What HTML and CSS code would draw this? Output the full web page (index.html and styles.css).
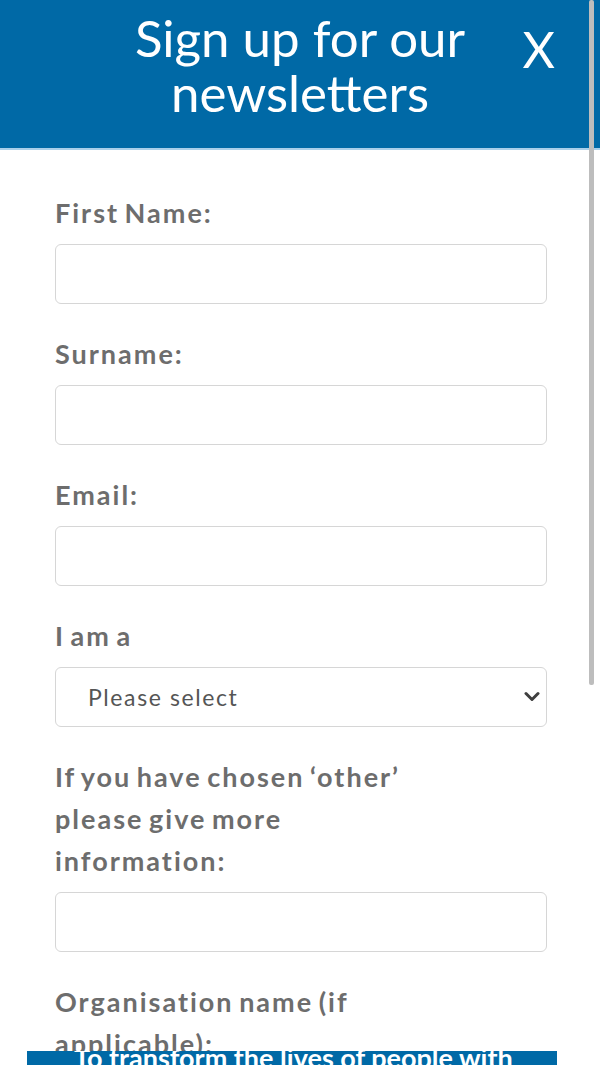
FILE: index.html
```html
<!DOCTYPE html>
<html lang="en">
<head>
<meta charset="utf-8">
<title>Sign up for our newsletters</title>
<link rel="stylesheet" href="styles.css">
</head>
<body>
<div class="modal">
  <header class="header">
    <span class="spacer"></span>
    <h1 class="title">Sign up for our<br>newsletters</h1>
    <button class="close" type="button">X</button>
  </header>
  <form class="form">
    <label class="label" for="fn">First Name:</label>
    <input class="field" id="fn" type="text">
    <label class="label" for="sn">Surname:</label>
    <input class="field" id="sn" type="text">
    <label class="label" for="em">Email:</label>
    <input class="field" id="em" type="email">
    <label class="label" for="iam">I am a</label>
    <div class="select-wrap">
      <select class="field select" id="iam">
        <option>Please select</option>
      </select>
      <svg class="chevron" width="16" height="11" viewBox="0 0 16 11" aria-hidden="true">
        <path d="M2 2.5 L8 8.5 L14 2.5" fill="none" stroke="#3f3f3f" stroke-width="3" stroke-linecap="round" stroke-linejoin="round"/>
      </svg>
    </div>
    <label class="label" for="oth">If you have chosen ‘other’<br>please give more<br>information:</label>
    <input class="field" id="oth" type="text">
    <label class="label" for="org">Organisation name (if<br>applicable):</label>
    <input class="field" id="org" type="text">
  </form>
</div>
<div class="scrollthumb"></div>
<div class="footer-peek"><span class="peek-text">To transform the lives of people with</span></div>
</body>
</html>
```
FILE: styles.css
```css
html, body {
  margin: 0;
  padding: 0;
  background: #ffffff;
}
body {
  font-family: Lato, "Open Sans", sans-serif;
  position: relative;
  height: 1065px;
  overflow: hidden;
}
.modal {
  width: 600px;
}
.header {
  background: #0069a6;
  height: 148px;
  border-bottom: 2px solid #a9cfea;
  display: grid;
  grid-template-columns: 1fr auto 1fr;
  align-items: start;
  box-sizing: content-box;
}
.title {
  margin: 0;
  padding-top: 10px;
  font-family: Lato, sans-serif;
  font-weight: 400;
  font-size: 51px;
  line-height: 55px;
  color: #ffffff;
  text-align: center;
  white-space: nowrap;
}
.close {
  justify-self: end;
  margin: 19px 45px 0 0;
  padding: 0;
  border: 0;
  background: transparent;
  color: #ffffff;
  font-family: Lato, sans-serif;
  font-weight: 400;
  font-size: 50px;
  line-height: 60px;
}
.form {
  display: flex;
  flex-direction: column;
  align-items: flex-start;
  padding: 42px 53px 0 55px;
}
.label {
  font-family: Lato, sans-serif;
  font-weight: 700;
  font-size: 27px;
  line-height: 42px;
  color: #6d6d6d;
  letter-spacing: 2px;
  word-spacing: -3px;
  white-space: nowrap;
}
.field {
  box-sizing: border-box;
  width: 492px;
  height: 60px;
  margin: 10px 0 29px;
  border: 1px solid #d6d6d6;
  border-radius: 6px;
  background: #ffffff;
  font-family: Lato, sans-serif;
  font-size: 23px;
  color: #555555;
}
.select-wrap {
  position: relative;
}
.select {
  appearance: none;
  -webkit-appearance: none;
  padding-left: 32px;
  letter-spacing: 1.6px;
}
.chevron {
  position: absolute;
  right: 7px;
  top: 34px;
  pointer-events: none;
}
.scrollthumb {
  position: absolute;
  left: 589px;
  top: 0;
  width: 5px;
  height: 685px;
  background: #bdbdbd;
  border-radius: 2px;
}
.footer-peek {
  position: absolute;
  left: 27px;
  top: 1051px;
  width: 530px;
  height: 20px;
  background: #0069a6;
  overflow: hidden;
}
.peek-text {
  display: block;
  margin-top: -8px;
  padding-left: 47px;
  font-family: Lato, sans-serif;
  font-weight: 700;
  font-size: 27px;
  line-height: 30px;
  color: #ffffff;
  white-space: nowrap;
}
```
